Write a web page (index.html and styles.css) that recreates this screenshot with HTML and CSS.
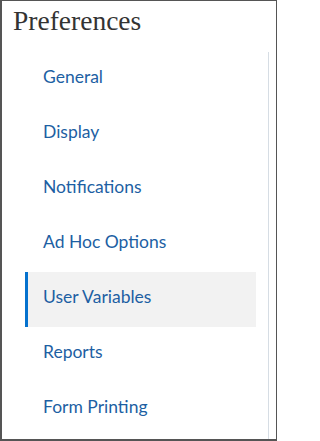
FILE: index.html
```html
<!DOCTYPE html>
<html>
<head>
<meta charset="utf-8">
<link rel="stylesheet" href="styles.css">
</head>
<body>
<div class="panel">
  <h1 class="title">Preferences</h1>
  <div class="body">
    <ul class="menu">
      <li class="item">General</li>
      <li class="item">Display</li>
      <li class="item">Notifications</li>
      <li class="item">Ad Hoc Options</li>
      <li class="item selected">User Variables</li>
      <li class="item">Reports</li>
      <li class="item">Form Printing</li>
    </ul>
    <div class="track"></div>
  </div>
</div>
</body>
</html>
```
FILE: styles.css
```css
html, body {
  margin: 0;
  padding: 0;
  background: #fff;
}
.panel {
  width: 277px;
  height: 441px;
  box-sizing: border-box;
  border: 1px solid #555;
  border-left-width: 2px;
  border-bottom-width: 2px;
  display: flex;
  flex-direction: column;
  overflow: hidden;
}
.title {
  margin: 0;
  height: 51px;
  flex: none;
  box-sizing: border-box;
  padding: 4px 0 0 11px;
  font-family: "Liberation Serif", "Times New Roman", serif;
  font-weight: normal;
  font-size: 27.5px;
  line-height: 32px;
  color: #333;
}
.body {
  flex: 1;
  display: flex;
}
.menu {
  list-style: none;
  margin: 0;
  padding: 0 0 0 23px;
  width: 254px;
  box-sizing: border-box;
  flex: none;
}
.item {
  height: 55px;
  box-sizing: border-box;
  display: flex;
  align-items: center;
  padding-left: 18px;
  padding-bottom: 6px;
  font-family: Lato, "Noto Sans", sans-serif;
  font-size: 17.5px;
  color: #1d5fa3;
}
.item.selected {
  background: #f2f2f2;
  border-left: 3px solid #0572ce;
  padding-left: 15px;
}
.track {
  margin-left: 12px;
  width: 1px;
  background: #d6dde4;
}
```
